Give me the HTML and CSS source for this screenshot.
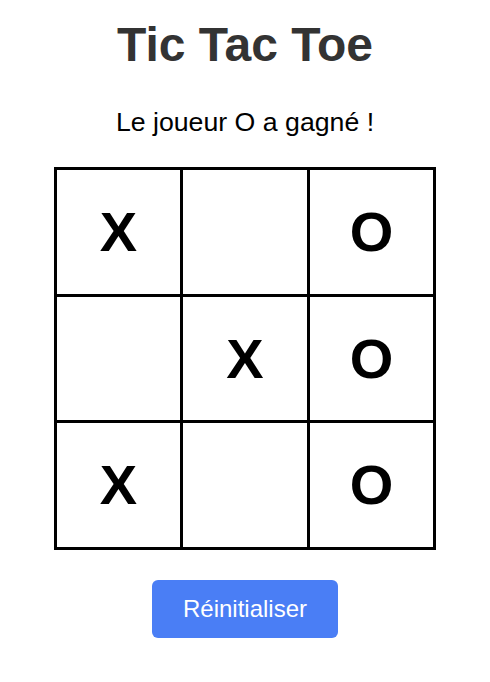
FILE: index.html
```html
<!DOCTYPE html>
<html lang="fr">
<head>
<meta charset="utf-8">
<title>Tic Tac Toe</title>
<link rel="stylesheet" href="styles.css">
</head>
<body>
<main class="game">
  <h1 class="title">Tic Tac Toe</h1>
  <p class="status">Le joueur O a gagné !</p>
  <div class="board">
    <div class="cell">X</div>
    <div class="cell"></div>
    <div class="cell">O</div>
    <div class="cell"></div>
    <div class="cell">X</div>
    <div class="cell">O</div>
    <div class="cell">X</div>
    <div class="cell"></div>
    <div class="cell">O</div>
  </div>
  <button class="reset">Réinitialiser</button>
</main>
</body>
</html>
```

FILE: styles.css
```css
html, body {
  margin: 0;
  padding: 0;
  background: #ffffff;
}

.game {
  display: flex;
  flex-direction: column;
  align-items: center;
  padding-top: 17px;
  font-family: "Liberation Sans", Arial, sans-serif;
}

.title {
  margin: 0 0 36px;
  font-size: 48px;
  font-weight: bold;
  line-height: 55px;
  color: #333333;
}

.status {
  margin: 0 0 30px;
  font-size: 26.7px;
  line-height: 29px;
  color: #000000;
}

.board {
  display: grid;
  grid-template-columns: repeat(3, 123.5px);
  grid-template-rows: repeat(3, 123.5px);
  gap: 3px;
  padding: 3px;
  background: #000000;
}

.cell {
  background: #ffffff;
  display: flex;
  align-items: center;
  justify-content: center;
  font-size: 56px;
  font-weight: bold;
  color: #000000;
}

.reset {
  margin-top: 30px;
  padding: 14.5px 31px;
  font-family: "Liberation Sans", Arial, sans-serif;
  font-size: 24px;
  line-height: 29px;
  color: #ffffff;
  background: #4a7ef5;
  border: none;
  border-radius: 6px;
}
```
